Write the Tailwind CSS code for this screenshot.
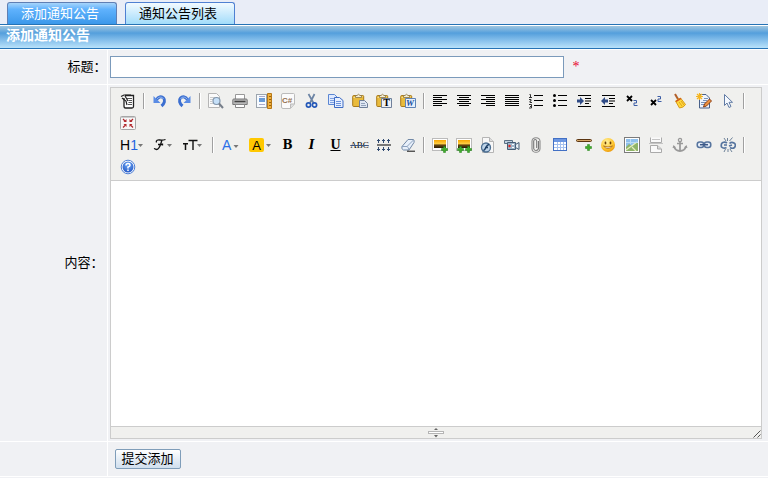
<!DOCTYPE html>
<html lang="zh-CN">
<head>
<meta charset="utf-8">
<title>添加通知公告</title>
<script src="https://cdn.jsdelivr.net/npm/@tailwindcss/browser@4"></script>
</head>
<body class="bg-[#f0f1f4] font-['Liberation_Sans','Noto_Sans_CJK_SC',sans-serif] text-[13px] leading-4 text-black">

<svg class="absolute size-0" aria-hidden="true">
  <defs>
    <linearGradient id="sun" x1="0" y1="0" x2="0" y2="1"><stop offset="0" stop-color="#f7a500"/><stop offset=".5" stop-color="#ffd24a"/><stop offset=".6" stop-color="#6b4a10"/><stop offset="1" stop-color="#2a1c08"/></linearGradient>
    <radialGradient id="face" cx=".4" cy=".3" r=".8"><stop offset="0" stop-color="#fff3a0"/><stop offset=".6" stop-color="#ffc62e"/><stop offset="1" stop-color="#e58a00"/></radialGradient>
    <radialGradient id="ball" cx=".5" cy=".3" r=".8"><stop offset="0" stop-color="#6fa8f5"/><stop offset="1" stop-color="#1c50c0"/></radialGradient>
    <g id="plus"><path d="M2 0h2v2h2v2H4v2H2V4H0V2h2z" fill="#3fae2a" stroke="#1f7d14" stroke-width=".5"/></g>
    <g id="board"><rect x=".7" y="2.500" width="11" height="11" rx="1" fill="#e9bb3c" stroke="#a87a1c"/><path d="M1.500 4.500l9-1" stroke="#fae292"/><path d="M3.500 4.500v-2h1.500q1.500-2.500 3 0h1.500v2z" fill="#f3ecd2" stroke="#8a7440" stroke-width=".8"/></g>
  </defs>
</svg>

<header class="flex h-6 items-end gap-2 bg-[#e9edf7] pl-[7px]">
  <a href="#add" class="flex h-[22px] w-[110px] items-center rounded-t-[3px] border border-b-0 border-[#5f7fb4] bg-linear-to-b from-[#a6d4fa] via-[#5fb2fd] via-30% to-[#3b98ea] pl-[13px] text-white">添加通知公告</a>
  <a href="#list" class="flex h-[22px] w-[110px] items-center rounded-t-[3px] border border-b-0 border-[#4f80d2] bg-linear-to-b from-[#f2faff] to-[#a2dcfa] pl-[13px]">通知公告列表</a>
</header>

<h1 class="flex h-[25px] items-center border-y border-[#2673b5] bg-linear-to-b from-[#a9cbe0] via-[#549fdc] via-35% to-[#b9e2fa] pb-1 pl-[6px] text-[14px] font-bold text-white shadow-[inset_0_1px_0_#ffffff]">添加通知公告</h1>

<form>
<table class="w-full border-collapse border-b border-white">
  <tbody>
  <tr class="border-t border-white">
    <th scope="row" class="w-[107px] p-0 text-right font-normal"><label for="title">标题：</label></th>
    <td class="border-l border-white py-[6px] pl-[2px]">
      <div class="flex items-center gap-[9px]">
        <input id="title" type="text" required class="h-[22px] w-[454px] border border-[#7b9abb] bg-white px-1">
        <span class="font-['Liberation_Serif',serif] text-[14px] text-[#e8002c]">*</span>
      </div>
    </td>
  </tr>
  <tr class="border-t border-white">
    <th scope="row" class="p-0 pr-[3px] text-right font-normal"><label for="content">内容：</label></th>
    <td class="border-l border-white py-[2px] pr-[6px] pl-[2px]">
      <div class="border border-[#cccccc] bg-[#f0f0ee]">
        <div role="toolbar" aria-label="编辑工具" class="border-b border-[#cccccc] py-[2px] pl-[5px]">
          <div class="flex flex-wrap items-center">
            <button type="button" title="HTML代码" class="flex h-[22px] w-6 items-center justify-center"><svg class="size-4" viewBox="0 0 16 16"><path d="M5 2.500h8.500v11q0 1.500-1.500 1.500H5.500Q4 15 4 13V5" fill="#fff" stroke="#222" stroke-width="1.300"/><path d="M1 3.500L4 2h7M2 5l4 3 1 4M5 3l3 5" fill="none" stroke="#222" stroke-width="1.200"/><path d="M7 5.500h5M8.500 7.500H12M8.500 9.500H12M8 11.500h4" stroke="#555"/></svg></button>
            <span class="mx-[3px] h-4 w-[2px] border-l border-[#a0a0a0] bg-white"></span>
            <button type="button" title="后退" class="flex h-[22px] w-6 items-center justify-center"><svg class="size-4" viewBox="0 0 16 16"><path d="M4.500 7C6 3.500 9.500 3 11.500 5s1 5.500-2 8" fill="none" stroke="#3c6fd0" stroke-width="3"/><path d="M1.500 3v7h7z" fill="#5b8ce4"/><path d="M5 6c2-2.500 5-2.500 6.500 0" stroke="#9bbcf5" fill="none"/></svg></button>
            <button type="button" title="前进" class="flex h-[22px] w-6 items-center justify-center"><svg class="size-4 -scale-x-100" viewBox="0 0 16 16"><path d="M4.500 7C6 3.500 9.500 3 11.500 5s1 5.500-2 8" fill="none" stroke="#3c6fd0" stroke-width="3"/><path d="M1.500 3v7h7z" fill="#5b8ce4"/><path d="M5 6c2-2.500 5-2.500 6.500 0" stroke="#9bbcf5" fill="none"/></svg></button>
            <span class="mx-[3px] h-4 w-[2px] border-l border-[#a0a0a0] bg-white"></span>
            <button type="button" title="预览" class="flex h-[22px] w-6 items-center justify-center"><svg class="size-4" viewBox="0 0 16 16"><path d="M.5.500h8l3 3v11H.5z" fill="#fafafa" stroke="#b5b5b5"/><path d="M2 4.500h5M2 6.500h3M2 8.500h2M2 10.500h3" stroke="#ccc"/><circle cx="8.500" cy="8" r="3.500" fill="#c6e0f8" stroke="#8296ac" stroke-width="1.200"/><path d="M11 10.500l4 4.500" stroke="#777f8a" stroke-width="2"/></svg></button>
            <button type="button" title="打印" class="flex h-[22px] w-6 items-center justify-center"><svg class="size-4" viewBox="0 0 16 16"><path d="M3.500 1.500h9v5h-9z" fill="#fff" stroke="#999"/><path d="M.8 7q0-1 1-1h12.400q1 0 1 1v4.500H.8z" fill="#b9b9b9" stroke="#777"/><path d="M2.500 8.500h11" stroke="#444" stroke-width="1.500"/><path d="M3.500 11.500h9v3h-9z" fill="#fff" stroke="#888"/></svg></button>
            <button type="button" title="插入模板" class="flex h-[22px] w-6 items-center justify-center"><svg class="size-4" viewBox="0 0 16 16"><path d="M.5 1.500h10v13H.5z" fill="#f7fbff" stroke="#456" stroke-dasharray="1 1"/><path d="M3 5h6v4H3z" fill="#6a9bd6"/><path d="M3 11.500h6M3 3.500h6" stroke="#aac"/><path d="M11.500.500h4v15h-4z" fill="#f0b03c" stroke="#b77816"/><path d="M13 3.500h2M13 6.500h2M13 9.500h2M13 12.500h2" stroke="#95600f"/></svg></button>
            <button type="button" title="插入程序代码" class="flex h-[22px] w-6 items-center justify-center"><svg class="size-4" viewBox="0 0 16 16"><path d="M1.500 2q0-1.500 1.500-1.500h10.500q1 0 1 1V11l-4 4.500H3Q1.500 15.500 1.500 14z" fill="#fbfbfb" stroke="#bbb"/><path d="M10.500 15v-4h4" fill="#ddd" stroke="#bbb"/><text x="2" y="10" font-family="Liberation Sans, sans-serif" font-size="8" font-weight="700" fill="#94704e">C#</text></svg></button>
            <button type="button" title="剪切" class="flex h-[22px] w-6 items-center justify-center"><svg class="size-4" viewBox="0 0 16 16"><path d="M4.500 1l5 9M10.500 1l-4.500 9" stroke="#6c84a4" stroke-width="1.700"/><circle cx="4.500" cy="12" r="2.100" fill="none" stroke="#2458b8" stroke-width="1.700"/><circle cx="10.500" cy="12" r="2.100" fill="none" stroke="#2458b8" stroke-width="1.700"/></svg></button>
            <button type="button" title="复制" class="flex h-[22px] w-6 items-center justify-center"><svg class="size-4" viewBox="0 0 16 16"><path d="M.5 1.500h6l3 3v7h-9z" fill="#dfeaff" stroke="#5b86d2"/><path d="M2 5.500h4M2 7.500h4M2 9.500h4" stroke="#7da0e0"/><path d="M6.500 4.500h5l3.500 3v7H6.500z" fill="#e6efff" stroke="#3d6bc4"/><path d="M8 8.500h5M8 10.500h5M8 12.500h5" stroke="#6b92dc"/></svg></button>
            <button type="button" title="粘贴" class="flex h-[22px] w-6 items-center justify-center"><svg class="size-4" viewBox="0 0 16 16"><use href="#board"/><path d="M7.500 7.500h5l3 3v4h-8z" fill="#dfe7f3" stroke="#6f7f98"/><path d="M9 10.500h4M9 12.500h5" stroke="#93a3bb"/></svg></button>
            <button type="button" title="粘贴为无格式文本" class="flex h-[22px] w-6 items-center justify-center"><svg class="size-4" viewBox="0 0 16 16"><use href="#board"/><path d="M5.500 5.500h10v9h-10z" fill="#eef1f6" stroke="#70809a"/><text x="7.200" y="13.400" font-family="Liberation Serif, serif" font-size="10" font-weight="700">T</text></svg></button>
            <button type="button" title="从Word粘贴" class="flex h-[22px] w-6 items-center justify-center"><svg class="size-4" viewBox="0 0 16 16"><use href="#board"/><path d="M5.500 5.500h10v9h-10z" fill="#e6effb" stroke="#5f83b6"/><text x="6" y="13" font-family="Liberation Serif, serif" font-size="9" font-weight="700" font-style="italic" fill="#174f9f">W</text></svg></button>
            <span class="mx-[3px] h-4 w-[2px] border-l border-[#a0a0a0] bg-white"></span>
            <button type="button" title="左对齐" class="flex h-[22px] w-6 items-center justify-center"><svg class="size-4" viewBox="0 0 16 16"><path d="M1 2.500h14M1 4.500h9M1 6.500h14M1 8.500h9M1 10.500h14M1 12.500h9" stroke="#000"/></svg></button>
            <button type="button" title="居中" class="flex h-[22px] w-6 items-center justify-center"><svg class="size-4" viewBox="0 0 16 16"><path d="M1 2.500h14M3 4.500h10M1 6.500h14M3 8.500h10M1 10.500h14M3 12.500h10" stroke="#000"/></svg></button>
            <button type="button" title="右对齐" class="flex h-[22px] w-6 items-center justify-center"><svg class="size-4" viewBox="0 0 16 16"><path d="M1 2.500h14M6 4.500h9M1 6.500h14M6 8.500h9M1 10.500h14M6 12.500h9" stroke="#000"/></svg></button>
            <button type="button" title="两端对齐" class="flex h-[22px] w-6 items-center justify-center"><svg class="size-4" viewBox="0 0 16 16"><path d="M1 2.500h14M1 4.500h14M1 6.500h14M1 8.500h14M1 10.500h14M1 12.500h14" stroke="#000"/></svg></button>
            <button type="button" title="编号" class="flex h-[22px] w-6 items-center justify-center"><svg class="size-4" viewBox="0 0 16 16"><path d="M6 2.500h9M6 7.500h9M6 12.500h9" stroke="#000"/><path d="M1.500 1.500h1v3M1 4.500h3M1 6.500h2v1.500h-1v1.500h2M1 11.500h2.500v3.500H1M2 13.500h1.500" fill="none" stroke="#333"/></svg></button>
            <button type="button" title="项目符号" class="flex h-[22px] w-6 items-center justify-center"><svg class="size-4" viewBox="0 0 16 16"><path d="M6 2.500h9M6 7.500h9M6 12.500h9" stroke="#000"/><circle cx="2.500" cy="2.500" r="1.500"/><circle cx="2.500" cy="7.500" r="1.500"/><circle cx="2.500" cy="12.500" r="1.500"/></svg></button>
            <button type="button" title="增加缩进" class="flex h-[22px] w-6 items-center justify-center"><svg class="size-4" viewBox="0 0 16 16"><path d="M2 2.500h13M9 5.500h6M9 8h6M9 10.500h4M2 13.500h13" stroke="#000" stroke-width="1.200"/><path d="M1 6.500h3V4l4 4-4 4V9.500H1z" fill="#2f4b86"/></svg></button>
            <button type="button" title="减少缩进" class="flex h-[22px] w-6 items-center justify-center"><svg class="size-4" viewBox="0 0 16 16"><path d="M2 2.500h13M9 5.500h6M9 8h6M9 10.500h4M2 13.500h13" stroke="#000" stroke-width="1.200"/><path d="M8 6.500H5V4L1 8l4 4V9.500h3z" fill="#2f4b86"/></svg></button>
            <button type="button" title="下标" class="flex h-[22px] w-6 items-center justify-center"><svg class="size-4" viewBox="0 0 16 16"><path d="M3 3l5 5M8 3L3 8" stroke="#000" stroke-width="1.800"/><path d="M9.500 7.500h3v2.500h-2.500v2.500h3.500" fill="none" stroke="#3c5da5"/></svg></button>
            <button type="button" title="上标" class="flex h-[22px] w-6 items-center justify-center"><svg class="size-4" viewBox="0 0 16 16"><path d="M3 7l5 5M8 7l-5 5" stroke="#000" stroke-width="1.800"/><path d="M9.500 3.500h3v2.500h-2.500v2.500h3.500" fill="none" stroke="#3c5da5"/></svg></button>
            <button type="button" title="清理HTML代码" class="flex h-[22px] w-6 items-center justify-center"><svg class="size-4" viewBox="0 0 16 16"><path d="M3 1l3.500 6" stroke="#b2602b" stroke-width="2"/><path d="M3.500 8l5-3 5 6.500q-1.500 3-6 3.500z" fill="#ffd83c" stroke="#d79b16"/><path d="M4 8.500l5-3" stroke="#d04e20" stroke-width="1.300"/><path d="M7 9l3 4M9 8l3 4" stroke="#e0a31c"/></svg></button>
            <button type="button" title="一键排版" class="flex h-[22px] w-6 items-center justify-center"><svg class="size-4" viewBox="0 0 16 16"><path d="M3.500 1.500H10l3.500 3.500v10h-10z" fill="#eef4fd" stroke="#49618a"/><path d="M5 9.500h5M5 11.500h4M8 5.500h4M7 7.500h4" stroke="#7a93bb"/><path d="M3.500 0v7M0 3.500h7M1 1l5 5M6 1L1 6" stroke="#f5b520" stroke-width="1.200"/><path d="M7.500 14l1-3 5-5 2 2-5 5z" fill="#ee9340" stroke="#8b3d12"/></svg></button>
            <button type="button" title="全选" class="flex h-[22px] w-6 items-center justify-center"><svg class="size-4" viewBox="0 0 16 16"><path d="M4.500 1.500v11l2.500-2.500 2 4.500 2-1-2-4.200h3.500z" fill="#f5f9ff" stroke="#617ba4"/></svg></button>
            <span class="mx-[3px] h-4 w-[2px] border-l border-[#a0a0a0] bg-white"></span>
            <button type="button" title="全屏显示" class="flex h-[22px] w-6 items-center justify-center"><svg class="size-4" viewBox="0 0 16 16"><rect x=".5" y="1.500" width="15" height="13" rx="1" fill="#f7f7f7" stroke="#a6a6a6"/><path d="M1 2.500h14" stroke="#ccc"/><path d="M6.500 4v3h-3zM9.500 4v3h3zM6.500 12V9h-3zM9.500 12V9h3z" fill="#b0262a"/><path d="M3 4l2 2M13 4l-2 2M3 12.500l2-2M13 12.500l-2-2" stroke="#b0262a" stroke-width="1.200"/></svg></button>
          </div>
          <div class="flex flex-wrap items-center">
            <button type="button" title="段落" class="flex h-[22px] w-[33px] items-center justify-center"><svg class="h-4 w-[25px]" viewBox="0 0 25 16"><text x="0" y="13" font-family="Liberation Sans, sans-serif" font-size="14">H<tspan fill="#1f63e0">1</tspan></text><path d="M18 7h5l-2.500 3z" fill="#777"/></svg></button>
            <button type="button" title="字体" class="flex h-[22px] w-[29px] items-center justify-center"><svg class="h-4 w-[21px]" viewBox="0 0 21 16"><path d="M3.500 5.500C2.500 3.500 5 2.500 7 3s4 0 5.500-.5M9 3C7.500 7 7 12.500 3.500 12.500c-1.500 0-2-.5-2.200-1.300M5 7.500h5M9.500 6.500v2" fill="none" stroke="#111" stroke-width="1.300"/><path d="M14 7h5l-2.500 3z" fill="#777"/></svg></button>
            <button type="button" title="文字大小" class="flex h-[22px] w-[31px] items-center justify-center"><svg class="h-4 w-[23px]" viewBox="0 0 23 16"><path d="M1 6.700h5M3.500 6.500V13" stroke="#111" stroke-width="1.500"/><path d="M6.500 3.500h9M11 3.500V13" stroke="#111" stroke-width="1.400"/><path d="M15 7h5l-2.500 3z" fill="#777"/></svg></button>
            <span class="mx-[3px] h-4 w-[2px] border-l border-[#a0a0a0] bg-white"></span>
            <button type="button" title="文字颜色" class="flex h-[22px] w-[28px] items-center justify-center"><svg class="h-4 w-5" viewBox="0 0 20 16"><text x="1" y="13" font-family="Liberation Sans, sans-serif" font-size="14" fill="#2b6fe8">A</text><path d="M12.500 8h5L15 11z" fill="#777"/></svg></button>
            <button type="button" title="文字背景" class="flex h-[22px] w-[31px] items-center justify-center"><svg class="h-4 w-[23px]" viewBox="0 0 23 16"><rect x="0" y="1" width="15" height="14" rx="2" fill="#ffc800"/><text x="3.200" y="12.500" font-family="Liberation Sans, sans-serif" font-size="13">A</text><path d="M17 7h5l-2.500 3z" fill="#777"/></svg></button>
            <button type="button" title="粗体" class="flex h-[22px] w-6 items-center justify-center font-['DejaVu_Serif',serif] text-[12px] font-bold">B</button>
            <button type="button" title="斜体" class="flex h-[22px] w-6 items-center justify-center font-['DejaVu_Serif',serif] text-[12px] font-bold italic">I</button>
            <button type="button" title="下划线" class="flex h-[22px] w-6 items-center justify-center font-['Liberation_Serif',serif] text-[14px] font-bold underline">U</button>
            <button type="button" title="删除线" class="flex h-[22px] w-6 items-center justify-center font-['Liberation_Serif',serif] text-[9px] text-black"><span class="line-through decoration-[#3c5580]">ABC</span></button>
            <button type="button" title="行距" class="flex h-[22px] w-6 items-center justify-center"><svg class="size-4" viewBox="0 0 16 16"><path d="M1 8h14" stroke="#777" stroke-width="2"/><path d="M2.500 2v4M7.500 2v4M12.500 2v4M1 3.500h3M6 3.500h3M11 3.500h3M2.500 10v4M7.500 10v4M12.500 10v4M1 12.500h3M6 12.500h3M11 12.500h3" stroke="#304a72"/></svg></button>
            <button type="button" title="删除格式" class="flex h-[22px] w-6 items-center justify-center"><svg class="size-4" viewBox="0 0 16 16"><path d="M8 2.500h5.500q1 1 .5 3L9 13H3.500Q1 12 2 9.500z" fill="#e8f0fa" stroke="#7188a6"/><path d="M2 9.500h5q2 1 2 3.500M7 9.500l6.500-6.500" fill="none" stroke="#8da2bf"/><path d="M7 14.200h8" stroke="#111"/></svg></button>
            <span class="mx-[3px] h-4 w-[2px] border-l border-[#a0a0a0] bg-white"></span>
            <button type="button" title="图片" class="flex h-[22px] w-6 items-center justify-center"><svg class="size-4" viewBox="0 0 16 16"><rect x=".5" y="1.500" width="15" height="12" fill="#fff" stroke="#bbb"/><rect x="2" y="3" width="12" height="8" fill="url(#sun)"/><use href="#plus" x="9.500" y="9.500"/></svg></button>
            <button type="button" title="批量图片上传" class="flex h-[22px] w-6 items-center justify-center"><svg class="size-4" viewBox="0 0 16 16"><rect x=".5" y="1.500" width="15" height="12" fill="#fff" stroke="#bbb"/><rect x="2" y="3" width="12" height="8" fill="url(#sun)"/><use href="#plus" x="1.500" y="9.500"/><use href="#plus" x="9.500" y="9.500"/></svg></button>
            <button type="button" title="Flash" class="flex h-[22px] w-6 items-center justify-center"><svg class="size-4" viewBox="0 0 16 16"><path d="M2.500.500h7l4 4v11h-11z" fill="#f8f8f8" stroke="#b5b5b5"/><path d="M9.500.500v4h4" fill="#ddd" stroke="#b5b5b5"/><circle cx="6" cy="10.500" r="4.500" fill="#bdd3e8" stroke="#4c6f92" stroke-width="1.300"/><path d="M3.500 13.500c2.500-.5 2-5.500 5.500-6M5 10.500h3" fill="none" stroke="#1d3f66" stroke-width="1.400"/></svg></button>
            <button type="button" title="视音频" class="flex h-[22px] w-6 items-center justify-center"><svg class="size-4" viewBox="0 0 16 16"><path d="M.5 3.500h8v3h-8z" fill="#bfd0e0" stroke="#5b7084"/><path d="M3.500 5.500h8v7h-8z" fill="#9fb4c8" stroke="#455d75"/><path d="M11.500 7.500l3.500-2v7l-3.500-2z" fill="#e6edf4" stroke="#455d75"/><circle cx="5.500" cy="9" r="1.200" fill="#e02020"/><path d="M8 7.500h2M8 10.500h2" stroke="#fff"/></svg></button>
            <button type="button" title="插入文件" class="flex h-[22px] w-6 items-center justify-center"><svg class="size-4" viewBox="0 0 16 16"><path d="M10.500 4v7.500q-.5 2-2.500 2t-2.300-2V4q.3-1.500 1.500-1.500T8.700 4v7" fill="none" stroke="#777" stroke-width="1.100"/><path d="M12 4v8q-.5 3.300-4 3.300T4 12V4q.3-3.300 4-3.300T12 4" fill="none" stroke="#8a8a8a" stroke-width="1.100"/></svg></button>
            <button type="button" title="表格" class="flex h-[22px] w-6 items-center justify-center"><svg class="size-4" viewBox="0 0 16 16"><rect x="1.500" y="1.500" width="13" height="12" fill="#fff" stroke="#4270c4"/><rect x="2" y="2" width="12" height="3" fill="#6c97e2"/><path d="M2 7.500h12M2 10.500h12M5.500 5v8M8.500 5v8M11.500 5v8" stroke="#a5c1ef"/></svg></button>
            <button type="button" title="插入横线" class="flex h-[22px] w-6 items-center justify-center"><svg class="size-4" viewBox="0 0 16 16"><rect x=".5" y="2.500" width="15" height="2" rx="1" fill="#d5a868" stroke="#5a3410"/><use href="#plus" x="9.500" y="7.500"/></svg></button>
            <button type="button" title="插入表情" class="flex h-[22px] w-6 items-center justify-center"><svg class="size-4" viewBox="0 0 16 16"><circle cx="8" cy="8" r="7" fill="url(#face)"/><ellipse cx="5.500" cy="6" rx=".9" ry="1.400" fill="#6b3d00"/><ellipse cx="10.500" cy="6" rx=".9" ry="1.400" fill="#6b3d00"/><path d="M3.500 9q4.500 5 9 0-4.500 2-9 0z" fill="#fff" stroke="#9c5800" stroke-width=".7"/></svg></button>
            <button type="button" title="Google地图" class="flex h-[22px] w-6 items-center justify-center"><svg class="size-4" viewBox="0 0 16 16"><rect x=".5" y=".5" width="15" height="15" fill="#fff" stroke="#7b7b7b"/><rect x="2" y="2" width="12" height="12" fill="#8fc0ec"/><path d="M2 10l3-3 3 2 4-4 2 1v8H2z" fill="#8fb468"/><path d="M2 13L13 5M8 10l4 4" stroke="#e7edbf" stroke-width="1.200"/><path d="M6.500 2v5M2 5.500h12" stroke="#bcdcf5"/></svg></button>
            <button type="button" title="插入分页符" class="flex h-[22px] w-6 items-center justify-center"><svg class="size-4" viewBox="0 0 16 16"><path d="M2.500.500v5h11v-5M2.500 15.500v-7h7l4 3.500v3.500z" fill="#fafafa" stroke="#aaa"/><path d="M4 2.500h8M1 6.500h14" stroke="#c5c5c5"/><path d="M9.500 8.500v3.500h4" fill="#ddd" stroke="#aaa"/></svg></button>
            <button type="button" title="锚点" class="flex h-[22px] w-6 items-center justify-center"><svg class="size-4" viewBox="0 0 16 16"><circle cx="8" cy="3" r="1.600" fill="none" stroke="#999" stroke-width="1.300"/><path d="M8 4.500V14M5 6.500h6" stroke="#999" stroke-width="1.700"/><path d="M2 9.500q1.500 4.500 6 4.500t6-4.500" fill="none" stroke="#999" stroke-width="1.900"/><path d="M.5 11l1-3L4 10.500zM15.500 11l-1-3L12 10.500z" fill="#999"/></svg></button>
            <button type="button" title="超级链接" class="flex h-[22px] w-6 items-center justify-center"><svg class="size-4" viewBox="0 0 16 16"><rect x="1.200" y="5" width="6.500" height="5.500" rx="2.500" fill="#e5edf8" stroke="#56749e" stroke-width="1.500"/><rect x="8.300" y="5" width="6.500" height="5.500" rx="2.500" fill="#e5edf8" stroke="#56749e" stroke-width="1.500"/><path d="M4 7.700h8" stroke="#3d5987" stroke-width="1.500"/></svg></button>
            <button type="button" title="取消超级链接" class="flex h-[22px] w-6 items-center justify-center"><svg class="size-4" viewBox="0 0 16 16"><path d="M7 6Q5 4.500 2.800 5.500T1.500 10q2 2 5 .5M4 8h3M9.500 6.500q2-2 4.500-.5t.5 4.500q-2 1.500-4.500 0M12 8l-3 1" fill="none" stroke="#56749e" stroke-width="1.700"/><path d="M7.500 1v3M4 1l2 3M12.500.500L9.500 4M8 12v3M5.500 12L4 15M10 12l2 3" stroke="#6e8299"/></svg></button>
            <span class="mx-[3px] h-4 w-[2px] border-l border-[#a0a0a0] bg-white"></span>
            <button type="button" title="关于" class="flex h-[22px] w-6 items-center justify-center"><svg class="size-4" viewBox="0 0 16 16"><circle cx="8" cy="8" r="6.800" fill="#fff" stroke="#4d7fd6"/><circle cx="8" cy="8" r="5.500" fill="url(#ball)"/><path d="M6 6.500q0-2 2-2t2 1.700Q10 7.500 8 8v1.500M8 10.500V12" fill="none" stroke="#fff" stroke-width="1.500"/></svg></button>
          </div>
        </div>
        <textarea id="content" class="block h-[245px] w-full resize-none bg-white p-1"></textarea>
        <div class="flex h-3 items-end border-t border-[#cccccc]">
          <span class="w-3"></span>
          <svg class="mx-auto h-[11px] w-4" viewBox="0 0 16 11"><path d="M8 1l2 2H6zM6 8h4l-2 2.500z" fill="#666"/><rect x=".5" y="4.500" width="15" height="2" fill="#fff" stroke="#b5b5b5"/></svg>
          <svg class="h-[11px] w-3" viewBox="0 0 12 11"><path d="M4.500 10.500l7-7M8.500 10.500l3-3" stroke="#555"/></svg>
        </div>
      </div>
    </td>
  </tr>
  <tr class="border-t border-white">
    <td></td>
    <td class="border-l border-white py-[7px] pl-[7px]">
      <button type="submit" class="block h-5 rounded-[2px] border border-[#7f9db9] bg-linear-to-b from-white via-[#e6eef6] to-[#d0dfee] px-[6px] leading-4">提交添加</button>
    </td>
  </tr>
  </tbody>
</table>
</form>
</body>
</html>
